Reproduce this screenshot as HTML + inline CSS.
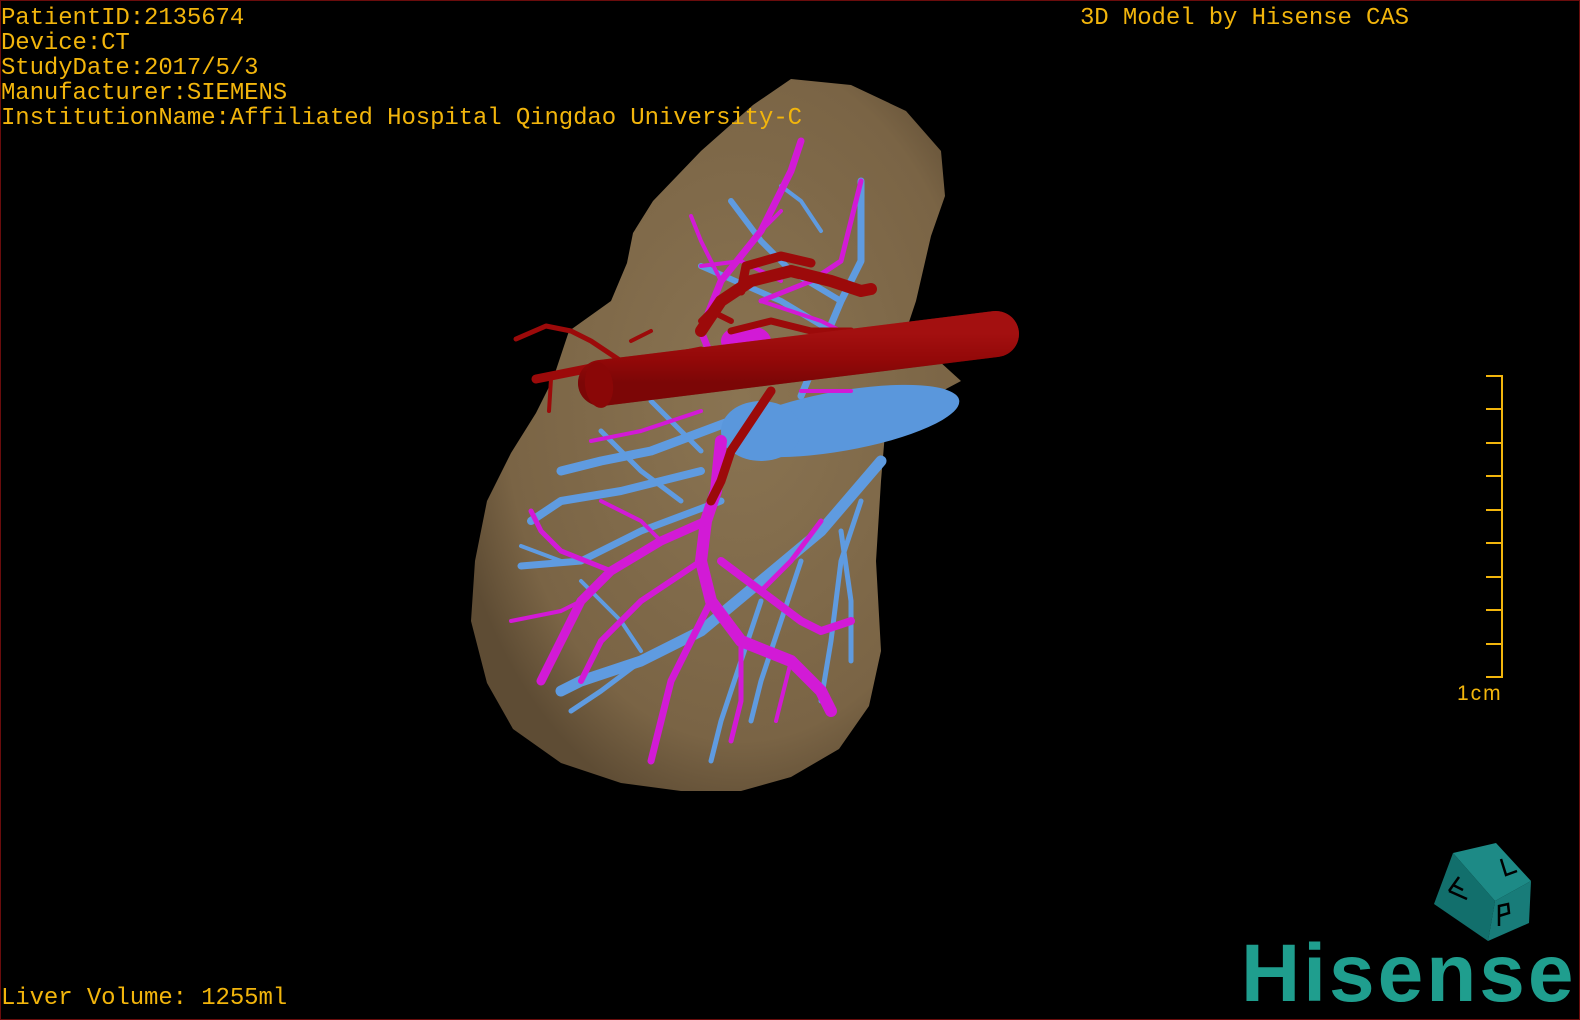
<!DOCTYPE html>
<html><head><meta charset="utf-8"><style>
html,body{margin:0;padding:0;background:#000;}
#w{position:relative;width:1578px;height:1018px;border:1px solid #6a0c0c;background:#000;overflow:hidden;}
.t{position:absolute;font-family:"Liberation Mono",monospace;font-size:24px;color:#f2b50c;white-space:pre;line-height:25px;letter-spacing:-0.1px;}
svg{position:absolute;left:0;top:0;}
</style></head><body><div id="w">
<svg width="1580" height="1020" viewBox="0 0 1580 1020">
<defs>
<radialGradient id="lg" cx="0.55" cy="0.45" r="0.6">
<stop offset="0" stop-color="#8a7452"/><stop offset="0.8" stop-color="#7a6445"/><stop offset="1" stop-color="#5e4c34"/>
</radialGradient>
<linearGradient id="rg" x1="0" y1="0" x2="0" y2="1"><stop offset="0" stop-color="#b81818"/><stop offset="0.5" stop-color="#9a0a0a"/><stop offset="1" stop-color="#6a0505"/></linearGradient>
</defs>
<path d="M790,78 L850,84 L905,110 L940,150 L944,195 L930,235 L915,300 L905,330 L960,380 L885,420 L880,480 L875,560 L880,650 L868,705 L838,748 L790,776 L740,790 L680,790 L620,782 L560,762 L512,728 L486,682 L470,620 L474,560 L486,500 L510,452 L535,412 L552,378 L568,330 L610,300 L626,262 L632,232 L652,200 L700,150 L752,104 Z" fill="url(#lg)"/>
<g fill="none" stroke-linecap="round" stroke-linejoin="round">
<g stroke="#5f9be0">
<path d="M730,420 L650,450 L600,460 L560,470" stroke-width="9"/>
<path d="M700,470 L620,490 L560,500 L530,520" stroke-width="8"/>
<path d="M720,500 L640,530 L580,560 L520,565" stroke-width="7"/>
<path d="M880,460 L820,530 L760,580 L700,630 L640,660 L580,680 L560,690" stroke-width="11"/>
<path d="M860,500 L840,560 L830,640 L820,700" stroke-width="5"/>
<path d="M800,560 L780,620 L760,680 L750,720" stroke-width="5"/>
<path d="M760,600 L740,660 L720,720 L710,760" stroke-width="5"/>
<path d="M840,530 L850,600 L850,660" stroke-width="5"/>
<path d="M640,660 L600,690 L570,710" stroke-width="5"/>
<path d="M600,430 L640,470 L680,500" stroke-width="5"/>
<path d="M650,400 L700,450" stroke-width="5"/>
<path d="M580,580 L620,620 L640,650" stroke-width="4"/>
<path d="M800,395 L840,300 L860,260 L860,180" stroke-width="7"/>
<path d="M840,300 L790,270 L760,240 L730,200" stroke-width="6"/>
<path d="M830,330 L780,300 L700,265" stroke-width="6"/>
<path d="M820,230 L800,200 L780,185" stroke-width="4"/>
<path d="M700,370 L760,380" stroke-width="4"/>
<path d="M520,545 L560,560" stroke-width="4"/>
</g>
<ellipse cx="840" cy="420" rx="120" ry="30" transform="rotate(-10 840 420)" fill="#5a97dc"/>
<ellipse cx="760" cy="430" rx="40" ry="30" fill="#5a97dc"/>
<g stroke="#d21ad6">
<path d="M720,440 L715,490 L705,520 L700,560 L710,600 L740,640 L790,660 L820,690 L830,710" stroke-width="12"/>
<path d="M705,520 L660,540 L610,570 L580,600 L560,640 L540,680" stroke-width="9"/>
<path d="M700,560 L640,600 L600,640 L580,680" stroke-width="6"/>
<path d="M710,600 L690,640 L670,680 L660,720 L650,760" stroke-width="7"/>
<path d="M720,560 L760,590 L800,620 L820,630 L850,620" stroke-width="8"/>
<path d="M740,640 L740,700 L730,740" stroke-width="5"/>
<path d="M790,660 L780,700 L775,720" stroke-width="4"/>
<path d="M610,570 L560,550 L540,530 L530,510" stroke-width="5"/>
<path d="M580,600 L560,610 L510,620" stroke-width="4"/>
<path d="M660,540 L640,520 L600,500" stroke-width="4"/>
<path d="M760,590 L790,560 L820,520" stroke-width="5"/>
<path d="M720,380 L700,330 L720,280 L760,230 L790,170 L800,140" stroke-width="7"/>
<path d="M720,280 L700,240 L690,215" stroke-width="4"/>
<path d="M760,230 L780,210" stroke-width="4"/>
<path d="M760,300 L810,280 L840,260 L860,180" stroke-width="5"/>
<path d="M780,280 L740,260 L700,265" stroke-width="4"/>
<path d="M760,300 L820,320 L860,340" stroke-width="4"/>
<path d="M590,440 L640,430 L700,410" stroke-width="4"/>
<path d="M800,390 L850,390" stroke-width="4"/>
</g>
<ellipse cx="745" cy="340" rx="25" ry="16" fill="#d21ad6"/>
<g stroke="#9c0a0a">
<path d="M700,330 L720,300 L750,280 L790,270 L830,280 L860,290 L870,288" stroke-width="12"/>
<path d="M740,290 L745,265 L780,255 L810,262" stroke-width="9"/>
<path d="M730,330 L770,320 L810,330 L850,330" stroke-width="7"/>
<path d="M700,350 L650,360 L600,365 L550,375 L535,378" stroke-width="9"/>
<path d="M620,360 L590,340 L570,330 L545,325 L515,338" stroke-width="5"/>
<path d="M630,340 L650,330" stroke-width="4"/>
<path d="M550,378 L548,410" stroke-width="4"/>
<path d="M770,390 L750,420 L730,450 L720,480 L710,500" stroke-width="9"/>
<path d="M730,320 L710,310 L700,320" stroke-width="6"/>
</g>
<path d="M600,382 L995,333" stroke="url(#rg)" stroke-width="46"/>
<path d="M600,382 L995,333" stroke="#8e0808" stroke-width="46" opacity="0.5"/>
</g>
<ellipse cx="598" cy="384" rx="14" ry="23" transform="rotate(-7 598 384)" fill="#8a0707"/>
<g stroke="#f2b50c" stroke-width="2">
<line x1="1501" y1="374" x2="1501" y2="677"/>
<line x1="1485" y1="375" x2="1501" y2="375"/><line x1="1485" y1="408" x2="1501" y2="408"/><line x1="1485" y1="442" x2="1501" y2="442"/><line x1="1485" y1="475" x2="1501" y2="475"/><line x1="1485" y1="509" x2="1501" y2="509"/><line x1="1485" y1="542" x2="1501" y2="542"/><line x1="1485" y1="576" x2="1501" y2="576"/><line x1="1485" y1="609" x2="1501" y2="609"/><line x1="1485" y1="643" x2="1501" y2="643"/><line x1="1485" y1="676" x2="1501" y2="676"/>
</g>
<text x="1456" y="699" font-family="Liberation Sans,sans-serif" font-size="21" fill="#f2b50c" letter-spacing="2">1cm</text>
<polygon points="1452,852 1495,842 1530,880 1494,900" fill="#1d8a86"/>
<polygon points="1452,852 1494,900 1487,940 1433,903" fill="#126f6c"/>
<polygon points="1494,900 1530,880 1528,922 1487,940" fill="#187c79"/>
<g stroke="#000" stroke-width="2.5" fill="none">
<path d="M1500,858 L1505,874 L1516,870"/>
<path d="M1448,890 L1458,876 M1448,890 L1466,898 M1452,884 L1462,889"/>
<path d="M1498,925 L1498,905 L1507,903 L1508,912 L1498,915"/>
</g>
<text x="1240" y="1000" font-family="Liberation Sans,sans-serif" font-weight="bold" font-size="82" fill="#1f9e8e" letter-spacing="3">Hisense</text>
</svg>
<div class="t" style="left:0;top:5px">PatientID:2135674
Device:CT
StudyDate:2017/5/3
Manufacturer:SIEMENS
InstitutionName:Affiliated Hospital Qingdao University-C</div>
<div class="t" style="left:1079px;top:5px">3D Model by Hisense CAS</div>
<div class="t" style="left:0;top:985px">Liver Volume: 1255ml</div>
</div></body></html>
